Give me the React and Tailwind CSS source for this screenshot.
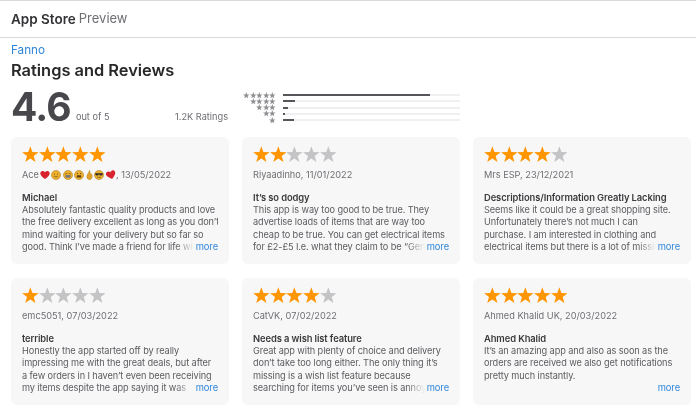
const font = { fontFamily: '"Inter", "Liberation Sans", sans-serif' };

const STAR = "M8.5 0.3 L10.6 6.2 L16.9 6.4 L11.9 10.2 L13.7 16.3 L8.5 12.7 L3.3 16.3 L5.1 10.2 L0.1 6.4 L6.4 6.2 Z";

function Star({ on }) {
  return (
    <svg width="16.7" height="16.7" viewBox="0 0 17 17" className="shrink-0">
      <path d={STAR} fill={on ? "#ff9500" : "#c4c4c6"} />
    </svg>
  );
}

function Heart({ tilt }) {
  return (
    <svg width="10" height="10" viewBox="0 0 11 11" className="shrink-0">
      <path
        transform={tilt ? "rotate(-15 5.5 5.5)" : undefined}
        d="M5.5 10 C2 7.4 .3 5.6 .3 3.6 C.3 2 1.5 1 2.9 1 C4 1 5 1.6 5.5 2.6 C6 1.6 7 1 8.1 1 C9.5 1 10.7 2 10.7 3.6 C10.7 5.6 9 7.4 5.5 10 Z"
        fill="#d8232f"
      />
    </svg>
  );
}

function Face({ kind }) {
  return (
    <svg width="10" height="10" viewBox="0 0 11 11" className="shrink-0">
      <circle cx="5.5" cy="5.5" r="5" fill="#eeb02f" stroke="#a87a1e" strokeWidth=".6" />
      {kind === "smile" && (
        <>
          <circle cx="3.8" cy="4.4" r=".6" fill="#6b4a12" />
          <circle cx="7.2" cy="4.4" r=".6" fill="#6b4a12" />
          <path d="M3.2 6.8 Q5.5 8.6 7.8 6.8" stroke="#6b4a12" strokeWidth=".7" fill="none" />
        </>
      )}
      {kind === "grin" && (
        <>
          <path d="M2.6 4.4 L4.6 3.8 M8.4 4.4 L6.4 3.8" stroke="#5c4012" strokeWidth=".8" />
          <rect x="2.6" y="5.6" width="5.8" height="2.8" rx="1" fill="#77787a" />
        </>
      )}
      {kind === "teeth" && (
        <>
          <circle cx="3.8" cy="3.9" r=".7" fill="#5c4012" />
          <circle cx="7.2" cy="3.9" r=".7" fill="#5c4012" />
          <rect x="3" y="5.8" width="5" height="2.4" rx=".8" fill="#5c4012" />
        </>
      )}
      {kind === "shades" && (
        <>
          <path d="M1.4 3.6 H9.6 V4.6 Q9.4 6 7.6 6 Q6 6 5.7 4.6 H5.3 Q5 6 3.4 6 Q1.6 6 1.4 4.6 Z" fill="#2b2b2b" />
          <path d="M3.4 7.6 Q5.5 9 7.6 7.6" stroke="#5c4012" strokeWidth=".7" fill="none" />
        </>
      )}
    </svg>
  );
}

function Hand() {
  return (
    <svg width="7" height="10" viewBox="0 0 9 11" preserveAspectRatio="none" className="shrink-0">
      <path
        d="M4.6 .4 C5.4 1.8 5 3 5.6 4 C6.6 3.6 8 4.6 8 6.8 C8 9.2 6.4 10.6 4.4 10.6 C2.4 10.6 1 9.2 1 7.2 C1 5 3.8 3.4 4.6 .4 Z"
        fill="#e3a32a"
        stroke="#a87a1e"
        strokeWidth=".5"
      />
    </svg>
  );
}

const reviews = [
  {
    stars: 5,
    author: (
      <span className="flex items-center">
        <span>Ace</span>
        <span className="ml-[1px] flex items-center gap-[1.5px]">
          <Heart />
          <Face kind="smile" />
          <Face kind="grin" />
          <Face kind="teeth" />
          <Hand />
          <Face kind="shades" />
          <Heart tilt />
        </span>
        <span>, 13/05/2022</span>
      </span>
    ),
    title: "Michael",
    lines: [
      "Absolutely fantastic quality products and love",
      "the free delivery excellent as long as you don’t",
      "mind waiting for your delivery but so far so",
      "good. Think I’ve made a friend for life with",
    ],
  },
  {
    stars: 2,
    author: "Riyaadinho, 11/01/2022",
    title: "It’s so dodgy",
    lines: [
      "This app is way too good to be true. They",
      "advertise loads of items that are way too",
      "cheap to be true. You can get electrical items",
      "for £2-£5 I.e. what they claim to be “Genuine",
    ],
  },
  {
    stars: 4,
    author: "Mrs ESP, 23/12/2021",
    title: "Descriptions/Information Greatly Lacking",
    lines: [
      "Seems like it could be a great shopping site.",
      "Unfortunately there’s not much I can",
      "purchase. I am interested in clothing and",
      "electrical items but there is a lot of missing",
    ],
  },
  {
    stars: 1,
    author: "emc5051, 07/03/2022",
    title: "terrible",
    lines: [
      "Honestly the app started off by really",
      "impressing me with the great deals, but after",
      "a few orders in I haven’t even been receiving",
      "my items despite the app saying it was",
    ],
  },
  {
    stars: 4,
    author: "CatVK, 07/02/2022",
    title: "Needs a wish list feature",
    lines: [
      "Great app with plenty of choice and delivery",
      "don’t take too long either. The only thing it’s",
      "missing is a wish list feature because",
      "searching for items you’ve seen is annoying",
    ],
  },
  {
    stars: 5,
    author: "Ahmed Khalid UK, 20/03/2022",
    title: "Ahmed Khalid",
    lines: [
      "It’s an amazing app and also as soon as the",
      "orders are received we also get notifications",
      "pretty much instantly.",
    ],
  },
];

function Card({ r }) {
  return (
    <div className="h-[127px] rounded-[6px] bg-[#f7f7f8] px-[11px] pt-[9px]">
      <div className="flex">
        {[1, 2, 3, 4, 5].map((n) => (
          <Star key={n} on={n <= r.stars} />
        ))}
      </div>
      <div className="mt-[5px] h-[14px] text-[9.2px] leading-[14px] text-[#6e6e73]">{r.author}</div>
      <div className="mt-[9px] whitespace-nowrap text-[9.4px] font-semibold leading-[13px] tracking-[-0.1px] text-[#3a3a3c]">{r.title}</div>
      <div className="relative text-[9.2px] leading-[12.5px] tracking-[-0.1px] text-[#5c5c60]">
        {r.lines.map((l, i) => (
          <div key={i} className="h-[12.5px] overflow-hidden whitespace-nowrap">
            {l}
          </div>
        ))}
        {r.lines.length < 4 && <div className="h-[12.5px]" />}
        <div className="absolute bottom-0 right-0 flex h-[12.5px] bg-[#f7f7f8]">
          <div className="absolute right-full h-full w-[18px] bg-gradient-to-r from-transparent to-[#f7f7f8]" />
          <span className="pl-[2px] text-[9.4px] text-[#2f86d8]">more</span>
        </div>
      </div>
    </div>
  );
}

function Histogram() {
  const rows = [
    [5, 147],
    [4, 12],
    [3, 5],
    [2, 2],
    [1, 11],
  ];
  return (
    <div className="flex w-[217px] flex-col gap-[0.25px]">
      {rows.map(([n, w]) => (
        <div key={n} className="flex h-[6px] items-center">
          <div className="flex w-[33px] justify-end">
            {Array.from({ length: n }).map((_, i) => (
              <svg key={i} width="6.6" height="6.6" viewBox="0 0 17 17" className="shrink-0">
                <path d={STAR} fill="#8e8e93" />
              </svg>
            ))}
          </div>
          <div className="ml-[7px] h-[2px] flex-1 bg-[#f0f0f3]">
            <div className="h-full bg-[#55555a]" style={{ width: w }} />
          </div>
        </div>
      ))}
    </div>
  );
}

export default function App() {
  return (
    <div style={font} className="h-[406px] w-[696px] overflow-hidden bg-white antialiased blur-[0.3px]">
      <header className="flex h-[38px] items-center border-y border-t-[#d9d9d9] border-b-[#d9d9d9] px-[11px]">
        <span className="text-[13.5px] font-semibold text-[#333336]">App Store</span>
        <span className="ml-[3px] text-[13px] text-[#6e6e73]">Preview</span>
      </header>
      <main className="px-[11px]">
        <div className="mt-[4px] text-[11.7px] leading-[16px] text-[#2f86d8]">Fanno</div>
        <h1 className="mt-[2px] text-[16.4px] font-semibold leading-[20px] text-[#28282a]">Ratings and Reviews</h1>
        <div className="mt-[2px] flex h-[47px]">
          <div className="flex w-[217px] items-end">
            <span className="text-[39px] font-bold leading-[44px] tracking-[-0.8px] text-[#48484c]">4.6</span>
            <span className="mb-[6px] ml-[5px] text-[9.2px] leading-[13px] text-[#6e6e73]">out of 5</span>
            <span className="mb-[6px] ml-auto text-[9.2px] leading-[13px] text-[#6e6e73]">1.2K Ratings</span>
          </div>
          <div className="ml-[15px] pt-[10px]">
            <Histogram />
          </div>
        </div>
        <div className="mt-[8px] grid grid-cols-[218px_218px_218px] gap-x-[13px] gap-y-[14px]">
          {reviews.map((r, i) => (
            <Card key={i} r={r} />
          ))}
        </div>
      </main>
    </div>
  );
}
